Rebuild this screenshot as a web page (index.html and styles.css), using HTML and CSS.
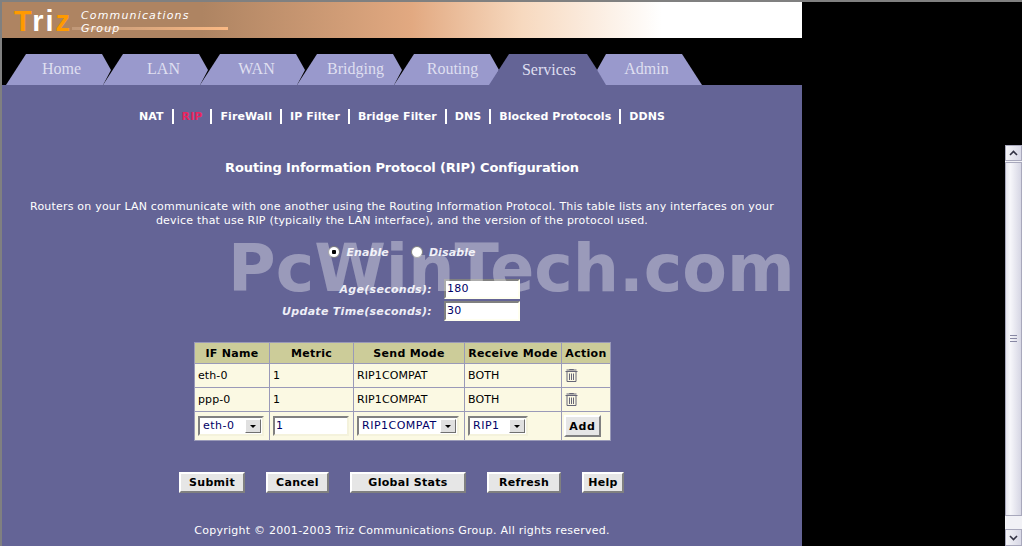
FILE: index.html
```html
<!DOCTYPE html>
<html lang="en">
<head>
  <meta charset="UTF-8">
  <title>Routing Information Protocol (RIP) Configuration</title>
  <link rel="stylesheet" href="styles.css">
</head>
<body>
  <div class="window">
    <div class="page">
      <!-- header -->
      <div class="banner">
        <div class="logo"><span class="t">T</span><span class="ri">ri</span><span class="t">z</span></div>
        <div class="rule"></div>
        <div class="tagline">Communications<br>Group</div>
      </div>

      <!-- tabs -->
      <div class="tabs">
        <div class="tab tab-home"><span>Home</span></div>
        <div class="tab tab-lan"><span>LAN</span></div>
        <div class="tab"><span>WAN</span></div>
        <div class="tab tab-bridging"><span>Bridging</span></div>
        <div class="tab tab-routing"><span>Routing</span></div>
        <div class="tab tab-active"><span>Services</span></div>
        <div class="tab tab-last"><span>Admin</span></div>
      </div>

      <div class="panel">
        <div class="subnav">
          <a>NAT</a><a class="current">RIP</a><a>FireWall</a><a>IP Filter</a><a>Bridge Filter</a><a>DNS</a><a>Blocked Protocols</a><a>DDNS</a>
        </div>

        <h1 class="title">Routing Information Protocol (RIP) Configuration</h1>
        <p class="intro">Routers on your LAN communicate with one another using the Routing Information Protocol. This table lists any interfaces on your device that use RIP (typically the LAN interface), and the version of the protocol used.</p>

        <div class="radios">
          <span class="radio radio-on"></span><em>Enable</em>
          <span class="radio"></span><em>Disable</em>
        </div>

        <div class="fields">
          <div class="field"><label>Age(seconds):</label><div class="input input-num">180</div></div>
          <div class="field"><label>Update Time(seconds):</label><div class="input input-num">30</div></div>
        </div>

        <table class="rip-table">
          <tr>
            <th class="c1">IF Name</th>
            <th class="c2">Metric</th>
            <th class="c3">Send Mode</th>
            <th class="c4">Receive Mode</th>
            <th class="c5">Action</th>
          </tr>
          <tr>
            <td>eth-0</td><td>1</td><td>RIP1COMPAT</td><td>BOTH</td>
            <td><svg class="trash" viewBox="0 0 13 13"><path d="M.5 2.5h12M1.5 1h10M4.5 1V.5h4V1M2 3v9.5h9V3M4.5 4.5v6.5M6.5 4.5v6.5M8.5 4.5v6.5" fill="none" stroke="#667"/></svg></td>
          </tr>
          <tr>
            <td>ppp-0</td><td>1</td><td>RIP1COMPAT</td><td>BOTH</td>
            <td><svg class="trash" viewBox="0 0 13 13"><path d="M.5 2.5h12M1.5 1h10M4.5 1V.5h4V1M2 3v9.5h9V3M4.5 4.5v6.5M6.5 4.5v6.5M8.5 4.5v6.5" fill="none" stroke="#667"/></svg></td>
          </tr>
          <tr class="row-add">
            <td><div class="select sel-if"><span>eth-0</span><i class="arrow"></i></div></td>
            <td><div class="input input-metric">1</div></td>
            <td><div class="select sel-send"><span>RIP1COMPAT</span><i class="arrow"></i></div></td>
            <td><div class="select sel-recv"><span>RIP1</span><i class="arrow"></i></div></td>
            <td><button class="btn btn-add">Add</button></td>
          </tr>
        </table>

        <div class="actions">
          <button class="btn btn-submit">Submit</button>
          <button class="btn btn-cancel">Cancel</button>
          <button class="btn btn-stats">Global Stats</button>
          <button class="btn btn-refresh">Refresh</button>
          <button class="btn btn-help">Help</button>
        </div>

        <div class="copyright">Copyright © 2001-2003 Triz Communications Group. All rights reserved.</div>
      </div>

      <div class="watermark">PcWinTech.com</div>
    </div>

    <!-- scrollbar -->
    <div class="scrollbar">
      <div class="sb-btn"><svg viewBox="0 0 9 6" class="sb-arrow"><path d="M1 5l3.5-3.5L8 5" fill="none" stroke="#334" stroke-width="1.6"/></svg></div>
      <div class="sb-thumb"><div class="grip"></div></div>
      <div class="sb-track"></div>
      <div class="sb-btn sb-btn-down"><svg viewBox="0 0 9 6" class="sb-arrow"><path d="M1 1l3.5 3.5L8 1" fill="none" stroke="#334" stroke-width="1.6"/></svg></div>
    </div>
  </div>
</body>
</html>
```

FILE: styles.css
```css
* {
  box-sizing: border-box;
}

html, body {
  margin: 0;
  height: 546px;
  overflow: hidden;
  background: #000;
}

body {
  font-family: "DejaVu Sans", sans-serif;
  font-size: 11px;
}

.window {
  display: flex;
  justify-content: space-between;
  height: 546px;
  border-top: 2px solid #808080;
  border-left: 2px solid #808080;
}

.page {
  position: relative;
  width: 800px;
  height: 544px;
}

/* header */
.banner {
  position: relative;
  height: 36px;
  background: linear-gradient(to right, #ae8462 0, #ae8462 200px, #e2a981 410px, #f7d9bf 520px, #fff 660px);
}

.logo {
  position: absolute;
  left: 12px;
  top: 4px;
  font: bold 29px/30px "Liberation Sans", sans-serif;
  letter-spacing: 2px;
  color: #fff;
}

.logo .t {
  color: #ff9a00;
}

.tagline {
  position: absolute;
  left: 79px;
  top: 7px;
  font: italic 11px/13px "DejaVu Sans", sans-serif;
  letter-spacing: 1.15px;
  color: #fff;
}

.rule {
  position: absolute;
  left: 70px;
  top: 25px;
  width: 156px;
  height: 3px;
  background: linear-gradient(to right, #c09878, #fbb984);
}

/* tabs */
.tabs {
  display: flex;
  height: 47px;
  padding: 16px 0 0 4px;
}

.tab {
  flex: none;
  width: 105px;
  height: 31px;
  margin-right: -8px;
  padding-top: 6px;
  text-align: center;
  font: 16px/18px "Liberation Serif", serif;
  color: #dfdff0;
  background: #9999cc;
  clip-path: polygon(0 31px, 20px 0, 96px 0, 105px 16px, 97px 31px);
}

.tab span {
  display: block;
  width: 105px;
  margin-left: 4px;
}

.tab-home span { margin-left: 3px; }
.tab-lan span { margin-left: 8px; }
.tab-bridging span,
.tab-routing span { margin-left: 6px; }

.tab-active {
  width: 118px;
  margin-left: -2px;
  margin-right: -20px;
  padding-top: 7px;
  background: #646496;
  clip-path: polygon(0 31px, 20px 0, 98px 0, 118px 31px);
}

.tab-active span {
  width: 118px;
  margin-left: 1px;
}

.tab-last {
  width: 115px;
  clip-path: polygon(10px 16px, 19px 0, 95px 0, 115px 31px, 19px 31px);
}

.tab-last span {
  width: 115px;
  margin-left: 2px;
}

/* panel */
.panel {
  height: 461px;
  background: #646496;
  color: #fff;
  text-align: center;
}

.subnav {
  display: flex;
  justify-content: center;
  padding: 24px 0 0;
  height: 75px;
  font-weight: bold;
  font-size: 11px;
  letter-spacing: 0.08px;
  color: #fff;
}

.subnav a {
  padding: 0 8px;
  border-left: 2px solid #fff;
  height: 15px;
  line-height: 15px;
}

.subnav a:first-child {
  border-left: 0;
}

.subnav .current {
  color: #e8245f;
}

.title {
  margin: 0;
  font-size: 13px;
  font-weight: bold;
  line-height: 16px;
  letter-spacing: -0.12px;
}

.intro {
  margin: 24px auto 0;
  width: 760px;
  font-size: 11px;
  line-height: 14px;
  letter-spacing: 0.2px;
}

.radios {
  display: flex;
  justify-content: center;
  align-items: center;
  height: 14px;
  margin-top: 17px;
  font-weight: bold;
}

.radios em {
  margin: 0 22px 0 6px;
  letter-spacing: 0.1px;
  color: #eeeef6;
}

.radios em:last-child {
  margin-right: 0;
}

.radio {
  width: 12px;
  height: 12px;
  border-radius: 50%;
  background: #fff;
  border: 1px solid #808080;
}

.radio-on {
  background: radial-gradient(circle, #000 0 2px, #fff 2.5px);
}

.fields {
  margin-top: 19px;
  width: 518px;
}

.field {
  display: flex;
  justify-content: flex-end;
  align-items: center;
  gap: 12px;
  height: 22px;
}

.field label {
  font-weight: bold;
  font-style: italic;
  letter-spacing: 0.3px;
  color: #eeeef6;
}

.input {
  background: #fffff4;
  border: 2px solid;
  border-color: #808080 #fffff0 #fffff0 #808080;
  color: #000066;
  text-align: left;
  font-size: 11px;
  line-height: 16px;
  letter-spacing: 0.3px;
  padding-left: 1px;
}

.input-num {
  width: 76px;
  height: 20px;
  background: #fff;
}

/* table */
.rip-table {
  margin: 20px 0 0 192px;
  border-collapse: separate;
  border-spacing: 1px;
  background: #9a9ab8;
  color: #000;
  text-align: left;
  line-height: 14px;
}

.rip-table th {
  height: 20px;
  padding: 1px 0 0;
  text-align: center;
  background: #cccc99;
  color: #000;
  font-size: 11px;
  letter-spacing: 0.3px;
}

.rip-table td {
  height: 23px;
  padding: 0 3px;
  background: #fbf9e3;
  font-size: 11px;
  letter-spacing: 0.1px;
}

.rip-table .row-add td {
  height: 28px;
}

.c1 { width: 74px; }
.c2 { width: 83px; }
.c3 { width: 110px; }
.c4 { width: 96px; }
.c5 { width: 48px; }

.trash {
  display: block;
  width: 13px;
  height: 13px;
}

.select {
  display: flex;
  justify-content: space-between;
  align-items: center;
  height: 20px;
  background: #fff;
  border: 2px solid;
  border-color: #808080 #f4f2dc #f4f2dc #808080;
  color: #000066;
  padding-left: 3px;
  padding-right: 1px;
  font-size: 11px;
  letter-spacing: 0.5px;
}

.sel-if { width: 66px; }
.sel-send { width: 102px; }
.sel-recv { width: 60px; }

.arrow {
  display: block;
  flex: none;
  width: 16px;
  height: 14px;
  background: #e0e0e0;
  border: 1px solid;
  border-color: #fff #707070 #707070 #fff;
  position: relative;
}

.arrow::after {
  content: "";
  position: absolute;
  left: 4px;
  top: 5px;
  border: 3px solid transparent;
  border-top-color: #000;
  border-bottom: 0;
}

.input-metric {
  width: 76px;
  height: 20px;
  background: #fff;
  border-color: #808080 #f4f2dc #f4f2dc #808080;
}

.btn {
  display: block;
  height: 21px;
  padding: 0;
  background: #e6e6e6;
  border: 2px solid;
  border-color: #fff #808080 #808080 #fff;
  font-family: "DejaVu Sans", sans-serif;
  font-size: 11px;
  font-weight: bold;
  letter-spacing: 0.3px;
  color: #000;
}

.btn-add {
  width: 37px;
  height: 22px;
  margin-left: -1px;
  letter-spacing: 0.7px;
}

.actions {
  display: flex;
  gap: 21px;
  margin: 31px 0 0 177px;
}

.btn-submit { width: 66px; }
.btn-cancel { width: 63px; }
.btn-stats { width: 116px; }
.btn-refresh { width: 74px; }
.btn-help { width: 42px; }

.copyright {
  margin: 31px 0 0;
  font-size: 11px;
  letter-spacing: 0.26px;
}

/* watermark */
.watermark {
  position: absolute;
  left: 226px;
  top: 227px;
  font: bold 65px/80px "DejaVu Sans", sans-serif;
  color: rgba(255, 255, 255, 0.35);
  white-space: nowrap;
  pointer-events: none;
}

/* scrollbar */
.scrollbar {
  display: flex;
  flex-direction: column;
  width: 17px;
  height: 401px;
  margin-top: 143px;
  background: #f1f1f6;
}

.sb-btn {
  flex: none;
  height: 16px;
  display: flex;
  align-items: center;
  justify-content: center;
  border: 1px solid #a8a8bc;
  background: linear-gradient(to right, #f4f4f8, #d8d8e6);
}

.sb-btn-down {
  height: 17px;
}

.sb-arrow {
  width: 9px;
  height: 6px;
}

.sb-thumb {
  flex: none;
  height: 354px;
  margin-top: 1px;
  display: flex;
  align-items: center;
  justify-content: center;
  border: 1px solid #a8a8bc;
  background: linear-gradient(to right, #e6e6ee, #f6f6fa 30%, #d6d6e4);
}

.grip {
  width: 7px;
  height: 8px;
  background: repeating-linear-gradient(to bottom, #8888a4 0 1px, transparent 1px 3px);
}

.sb-track {
  flex: 1;
}
```
